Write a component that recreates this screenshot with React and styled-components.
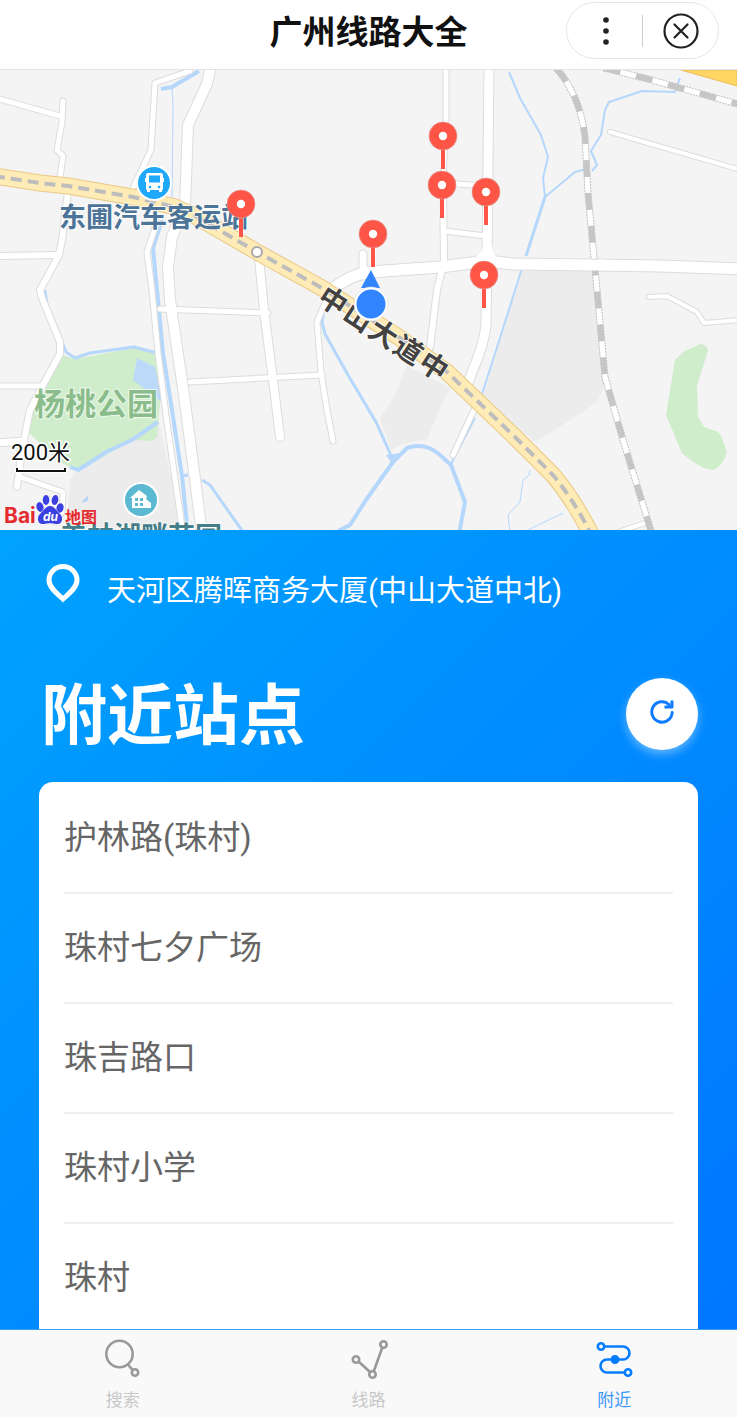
import styled, { createGlobalStyle } from 'styled-components';

const stations = ['护林路(珠村)', '珠村七夕广场', '珠吉路口', '珠村小学', '珠村'];

const pins = [
  { x: 241, y: 204 },
  { x: 373, y: 234 },
  { x: 443, y: 136 },
  { x: 442, y: 185 },
  { x: 486, y: 192 },
  { x: 484, y: 275 },
];

const roads = [
  { w: 5, d: 'M-4 98L60 116' },
  { w: 5, d: 'M63 101L62 122L57 150L63 156L60 178' },
  { w: 6, d: 'M68 192L62 240L59 255L40 290L42 298L60 342L60 354L43 385L30 410L22 450L17 487' },
  { w: 6, d: 'M-4 256L58 255' },
  { w: 5, d: 'M-4 386L42 386' },
  { w: 7, d: 'M-4 443L24 441' },
  { w: 5, d: 'M20 477L63 492L62 512L56 522' },
  { w: 5, d: 'M190 71L155 83L151 150L131 192' },
  { w: 5, d: 'M157 222L147 252L152 290L158 353L167 423L183 534' },
  { w: 5, d: 'M160 309L268 313' },
  { w: 5, d: 'M190 382L322 375' },
  { w: 8, d: 'M259 258L264 310L273 380L280 437' },
  { w: 5, d: 'M328 296L317 322L321 372L327 410L333 441' },
  { w: 7, d: 'M363 254L363 276' },
  { w: 5, d: 'M446 66L446 120L443 180' },
  { w: 6, d: 'M443 180L444 262L437 290L430 347L424 362' },
  { w: 5, d: 'M443 183L486 186' },
  { w: 5, d: 'M444 231L486 236' },
  { w: 5, d: 'M474 410L453 455' },
  { w: 4, d: 'M610 132L741 170' },
  { w: 4, d: 'M649 297L667 296L697 312L704 323L741 320' },
  { w: 4, d: 'M618 532L645 523' },
  { w: 10, d: 'M211 66L207 84L188 125L185 205L172 237L168 267L170 300L185 402L202 534' },
  { w: 9, d: 'M489 66L487 260L486 325Q484 345 472 372L465 392' },
  { w: 11, d: 'M326 294Q350 274 370 272L440 267L487 261L513 264L597 265L660 266L741 269' },
];

const rivers = [
  { w: 4, d: 'M161 89L172 87L199 71' },
  { w: 1, d: 'M172 88L173 105L172 200' },
  { w: 4, d: 'M162 220L153 248L157 290L163 353L172 410L182 476L188 534' },
  { w: 3, d: 'M182 476L188 475' },
  { w: 3, d: 'M202 480L210 485L243 532' },
  { w: 3, d: 'M45 290L47 305L57 328L66 352L75 358L90 353L134 347L157 353' },
  { w: 4, d: 'M158 422L132 440L108 451L78 470L70 467' },
  { w: 2, d: 'M509 72L520 98L541 135L548 157L543 178L545 197' },
  { w: 2, d: 'M545 197L575 172L586 169' },
  { w: 2, d: 'M592 171L597 165L591 151L601 135L605 110L609 102L642 91L675 92L680 78' },
  { w: 3, d: 'M545 197L526 256' },
  { w: 2, d: 'M522 268L500 338L482 394' },
  { w: 2, d: 'M475 418L451 464' },
  { w: 3, d: 'M324 308L322 322L325 334L348 375L376 422L393 460' },
  { w: 4, d: 'M338 531L350 525L366 500L393 462L407 448Q425 442 440 455L451 465L465 502L459 534' },
  { w: 1, d: 'M530 470L529 475L523 480L520 502L508 515L510 532' },
  { w: 1, d: 'M524 532L563 513' },
];

const highway =
  'M-6 176L40 183L68 186L133 197L175 207L195 216L257 252L322 288L400 338L447 372L493 416L517 439L553 475Q574 500 592 536';
const railway = 'M556 68Q580 95 585 137L588 193L597 290L605 377L623 440L652 534';
const branchRail = 'M604 68L648 79L741 105';

function Pin({ x, y }) {
  return (
    <g transform={`translate(${x} ${y})`}>
      <path d="M0 12V33" stroke="#fff" strokeWidth="6" opacity=".5" />
      <path d="M0 12V33" stroke="#ff5546" strokeWidth="4" />
      <circle r="14" fill="#ff5546" stroke="#d9a09a" strokeWidth=".6" />
      <circle r="4.2" fill="#fff" />
    </g>
  );
}

function CityMap() {
  return (
    <MapSvg viewBox="0 70 737 460" role="img" aria-label="附近地图">
      <rect y="70" width="737" height="460" fill="#f4f4f4" />
      <g fill="#ececec">
        <path d="M407 366L395 395L380 418L391 450Q410 440 427 440L440 408L450 388Z" />
        <path d="M522 269L595 269L606 384L598 400L583 412L535 442L483 396Z" />
        <path d="M159 421L80 468L70 480L66 530H182Z" />
      </g>
      <g fill="#cfedcb">
        <path d="M62 355L75 359L134 348L156 353L160 402L157 437L153 441L133 440L77 471L60 462L28 432L30 410L43 386Z" />
        <path d="M700 344Q707 344 708 351L697 385L698 417L704 427L718 432Q723 438 727 453Q722 467 713 470Q700 469 682 453L666 415L675 360L683 352Z" />
      </g>
      <path d="M137 358L155 367L162 402L133 380Z" fill="#bbd9f8" />
      <path d="M82 502L88 496L87 501Z" fill="#b6d6fb" stroke="#b6d6fb" />
      <g fill="none" stroke="#b5d7fb" strokeLinejoin="round">
        {rivers.map((r) => (
          <path key={r.d} d={r.d} strokeWidth={r.w} />
        ))}
      </g>
      <path d="M386 455L393 465L401 453Z" fill="#b5d7fb" />
      <g fill="none" stroke="#dcdcdc" strokeLinejoin="round" strokeLinecap="round">
        {roads.map((r) => (
          <path key={r.d} d={r.d} strokeWidth={r.w + 2} />
        ))}
      </g>
      <g fill="none" stroke="#fff" strokeLinejoin="round" strokeLinecap="round">
        {roads.map((r) => (
          <path key={r.d} d={r.d} strokeWidth={r.w} />
        ))}
      </g>
      <path d="M474 258Q482 254 483 246H492Q493 256 500 260Z" fill="#fff" />

      <g fill="none">
        {[branchRail, railway].map((d) => (
          <g key={d}>
            <path d={d} stroke="#c0c0c0" strokeWidth="7" strokeDasharray="2 1" />
            <path d={d} stroke="#fff" strokeWidth="5" />
            <path d={d} stroke="#c6c6c6" strokeWidth="6" strokeDasharray="17 16" />
          </g>
        ))}
        <path d="M589 265H603" stroke="#fff" strokeWidth="11" />
        <path d={highway} stroke="#e9c886" strokeWidth="17" />
        <path d={highway} stroke="#ffebb5" strokeWidth="15" />
        <path d={highway} stroke="#bdbdbd" strokeWidth="4" strokeDasharray="11 6" />
      </g>
      <path d="M681 70H737V86Z" fill="#ffd564" stroke="#eebb55" />
      <circle cx="257" cy="252" r="5" fill="#fff" stroke="#aaa" strokeWidth="2" />

      <MapLabel x="59" y="227" size={27} color="#4b7498">
        东圃汽车客运站
      </MapLabel>
      <MapLabel x="34" y="415" size={31} color="#8abd8b">
        杨桃公园
      </MapLabel>
      <MapLabel x="60" y="546" size={27} color="#45808a">
        美林湖畔花园
      </MapLabel>
      <g transform="translate(333 301) rotate(33)">
        <MapLabel x="-14 16 46 76 106" y="10" size={28} color="#424242">
          中山大道中
        </MapLabel>
      </g>

      <circle cx="154" cy="183" r="18" fill="#fff" />
      <circle cx="154" cy="183" r="16" fill="#20a9fa" />
      <path
        d="M148 173h13q2 0 2 2v3h1v4h-1v7q0 1-1 1v2h-3v-2h-9v2h-3v-2q-1 0-1-1v-7h-1v-4h1v-3q0-2 2-2Z"
        fill="#fff"
      />
      <path d="M149 175.500h11v7h-11Z" fill="#20a9fa" />
      <circle cx="150" cy="187" r="1.300" fill="#20a9fa" />
      <circle cx="159" cy="187" r="1.300" fill="#20a9fa" />

      <circle cx="141" cy="500" r="18" fill="#fff" />
      <circle cx="141" cy="500" r="16" fill="#5bb9d1" />
      <path d="M130 498L139 490L147 496L146 499L151 503V508H132V498Z" fill="#fff" />
      <path d="M135 498h3v3h-3zM140 498h3v3h-3zM135 503h3v3h-3zM140 503h3v3h-3z" fill="#5bb9d1" />

      {pins.map((p) => (
        <Pin key={`${p.x}-${p.y}`} x={p.x} y={p.y} />
      ))}

      <path d="M371 270L380 288H361Z" fill="#3385ff" />
      <circle cx="371" cy="304" r="17" fill="#fff" stroke="#ddd" strokeWidth=".5" />
      <circle cx="371" cy="304" r="14.500" fill="#3385ff" />

      <ScaleText x="11" y="460">200米</ScaleText>
      <path d="M17 468V471H65V468" fill="none" stroke="#fff" strokeWidth="4" />
      <path d="M17 468V471H65V468" fill="none" stroke="#111" strokeWidth="2" />

      <LogoText x="4" y="523" size={21} color="#e62b2f">
        Bai
      </LogoText>
      <g fill="#3d40e0" stroke="#fff" strokeWidth="1" paintOrder="stroke">
        <ellipse cx="40" cy="507" rx="3.500" ry="5" transform="rotate(-15 40 507)" />
        <ellipse cx="46" cy="500" rx="3.300" ry="5" />
        <ellipse cx="55" cy="500" rx="3.300" ry="5" transform="rotate(12 55 500)" />
        <ellipse cx="60" cy="508" rx="3.500" ry="4.800" transform="rotate(15 60 508)" />
        <path d="M50 506C54 506 56 510 60 514C64 518 62 525 56 524C52 523 48 523 44 524C38 525 36 518 40 514C44 510 46 506 50 506Z" />
      </g>
      <LogoText x="43" y="521" size={12} color="#fff" slanted>
        du
      </LogoText>
      <LogoText x="65" y="523" size={16} color="#e62b2f">
        地图
      </LogoText>
    </MapSvg>
  );
}

function SearchIcon() {
  return (
    <TabSvg viewBox="0 0 40 40">
      <circle cx="16.500" cy="15" r="13.200" />
      <path d="M25 25.500L29.500 31" />
      <circle cx="32" cy="33.500" r="3.200" />
    </TabSvg>
  );
}

function RouteIcon() {
  return (
    <TabSvg viewBox="0 0 40 40">
      <circle cx="7" cy="20.500" r="3.200" />
      <circle cx="23.500" cy="35.500" r="3.200" />
      <circle cx="34.500" cy="5.500" r="3.200" />
      <path d="M9.500 22.500L21 33M24.700 32.500L33.300 8.500" />
    </TabSvg>
  );
}

function NearbyIcon() {
  return (
    <TabSvg viewBox="0 0 40 40">
      <circle cx="7" cy="7.500" r="3.200" />
      <circle cx="34" cy="33.500" r="3.200" />
      <circle cx="21" cy="20.500" r="3.200" fill="currentColor" />
      <path d="M10.500 7.500H29a6.500 6.500 0 0 1 0 13H13a6.500 6.500 0 0 0 0 13H30.500" />
    </TabSvg>
  );
}

const tabs = [
  { name: '搜索', Icon: SearchIcon },
  { name: '线路', Icon: RouteIcon },
  { name: '附近', Icon: NearbyIcon, active: true },
];

function App() {
  return (
    <>
      <GlobalStyle />
      <Page>
        <Header>
          <Title>广州线路大全</Title>
          <Capsule>
            <CapsuleButton aria-label="更多">
              <svg width="36" height="36" viewBox="0 0 36 36" fill="#222">
                <circle cx="19" cy="7" r="2.800" />
                <circle cx="19" cy="18" r="2.800" />
                <circle cx="19" cy="29" r="2.800" />
              </svg>
            </CapsuleButton>
            <CapsuleLine />
            <CapsuleButton aria-label="关闭">
              <svg width="36" height="36" viewBox="0 0 36 36" fill="none" stroke="#222" strokeWidth="2.200">
                <circle cx="18" cy="18" r="16.500" />
                <path d="M11.500 11.500L24.500 24.500M24.500 11.500L11.500 24.500" strokeLinecap="round" />
              </svg>
            </CapsuleButton>
          </Capsule>
        </Header>
        <Main>
          <CityMap />
          <Panel>
            <Address>
              <svg width="34" height="40" viewBox="0 0 34 40" fill="none" stroke="#fff" strokeWidth="5">
                <path d="M17 35C13 31 3 24.500 3 16A14 13.500 0 0 1 31 16C31 24.500 21 31 17 35Z" />
              </svg>
              <AddressText>天河区腾晖商务大厦(中山大道中北)</AddressText>
            </Address>
            <HeadingRow>
              <Heading>附近站点</Heading>
              <RefreshButton aria-label="刷新">
                <svg width="28" height="28" viewBox="0 0 28 28" fill="none" stroke="#0f7bff" strokeWidth="3">
                  <path d="M24.200 14.500A10.200 10.200 0 1 1 21 6.500" strokeLinecap="round" />
                  <path d="M16.500 9H24V2.500" strokeLinejoin="round" />
                </svg>
              </RefreshButton>
            </HeadingRow>
            <StationList>
              {stations.map((name) => (
                <StationItem key={name}>
                  <StationLink href="#station">{name}</StationLink>
                </StationItem>
              ))}
            </StationList>
          </Panel>
        </Main>
        <TabBar>
          {tabs.map(({ name, Icon, active }) => (
            <Tab key={name} $active={active}>
              <Icon />
              <TabName $active={active}>{name}</TabName>
            </Tab>
          ))}
        </TabBar>
      </Page>
    </>
  );
}

export default App;

const GlobalStyle = createGlobalStyle`
  * {
    box-sizing: border-box;
  }
  body {
    margin: 0;
    font-family: Roboto, 'Noto Sans CJK SC', sans-serif;
  }
  button {
    padding: 0;
    border: 0;
    background: none;
    font: inherit;
    cursor: pointer;
  }
`;

const Page = styled.div`
  display: flex;
  flex-direction: column;
  height: 100vh;
  background: #fff;
`;
const Header = styled.header`
  display: grid;
  grid-template-columns: 1fr auto 1fr;
  align-items: center;
  padding: 2px 18px 10px;
  border-bottom: 1px solid #e4e4e4;
`;
const Title = styled.h1`
  grid-column: 2;
  margin: 0;
  padding-top: 4px;
  font-size: 33px;
  font-weight: 700;
  line-height: 40px;
  color: #111;
`;
const Capsule = styled.div`
  justify-self: end;
  display: flex;
  align-items: center;
  height: 57px;
  border: 1px solid #e6e6e6;
  border-radius: 29px;
`;
const CapsuleButton = styled.button`
  display: flex;
  align-items: center;
  justify-content: center;
  width: 75px;
  height: 100%;
`;
const CapsuleLine = styled.span`
  width: 1px;
  height: 32px;
  background: #ccc;
`;
const Main = styled.main`
  flex: 1;
  display: flex;
  flex-direction: column;
  min-height: 0;
  overflow-y: auto;
  scrollbar-width: none;
`;
const MapSvg = styled.svg`
  display: block;
  flex-shrink: 0;
  width: 100%;
`;
const MapLabel = styled.text.attrs((props) => ({
  fontSize: props.size,
  fill: props.color,
}))`
  font-family: 'Noto Sans CJK SC', sans-serif;
  font-weight: 700;
  stroke: #fff;
  stroke-width: 2px;
  stroke-opacity: 0.7;
  paint-order: stroke;
`;
const ScaleText = styled.text`
  font-size: 22px;
  fill: #111;
  stroke: #fff;
  stroke-width: 3px;
  paint-order: stroke;
`;
const LogoText = styled.text.withConfig({
  shouldForwardProp: (prop) => prop !== 'slanted' && prop !== 'size',
})`
  font-size: ${(props) => props.size}px;
  font-family: Inter, 'Noto Sans CJK SC', sans-serif;
  font-weight: 700;
  font-style: ${(props) => (props.slanted ? 'italic' : 'normal')};
  fill: ${(props) => props.color};
`;
const Panel = styled.section`
  flex: 1 0 auto;
  padding: 34px 39px 0;
  background: linear-gradient(135deg, #00a2ff 0%, #0076ff 100%);
`;
const Address = styled.div`
  display: flex;
  gap: 27px;
  padding-left: 7px;
`;
const AddressText = styled.p`
  margin: 0;
  font-size: 29px;
  font-weight: 400;
  line-height: 54px;
  color: #fff;
`;
const HeadingRow = styled.div`
  display: flex;
  align-items: center;
  justify-content: space-between;
  margin-top: 60px;
`;
const Heading = styled.h2`
  margin: 0;
  padding: 6px 0 0 2px;
  font-size: 66px;
  font-weight: 700;
  line-height: 66px;
  color: #fff;
`;
const RefreshButton = styled.button`
  display: flex;
  align-items: center;
  justify-content: center;
  width: 72px;
  height: 72px;
  && {
    background: #fff;
    padding-bottom: 4px;
  }
  border-radius: 50%;
  box-shadow: 0 4px 10px rgba(255, 255, 255, 0.4);
`;
const StationList = styled.ul`
  margin: 32px 0 0;
  padding: 2px 25px 0;
  list-style: none;
  background: #fff;
  border-radius: 14px 14px 0 0;
`;
const StationItem = styled.li`
  border-bottom: 2px solid #eee;

  &:last-child {
    border-bottom: 0;
  }
`;
const StationLink = styled.a`
  display: block;
  font-size: 33px;
  line-height: 108px;
  color: #666;
  text-decoration: none;
`;
const TabBar = styled.nav`
  display: flex;
  border-top: 1px solid #3d9ff0;
  background: #f9f9f9;
`;
const Tab = styled.button`
  flex: 1;
  display: flex;
  flex-direction: column;
  align-items: center;
  gap: 11px;
  && {
    padding: 9px 0 7px;
  }
  color: ${(props) => (props.$active ? '#067dff' : '#999')};
`;
const TabSvg = styled.svg`
  width: 40px;
  height: 40px;
  fill: none;
  stroke: currentColor;
  stroke-width: 2.6px;
`;
const TabName = styled.span`
  font-size: 17px;
  line-height: 20px;
  color: ${(props) => (props.$active ? '#3c97f7' : '#c8c8c8')};
`;
